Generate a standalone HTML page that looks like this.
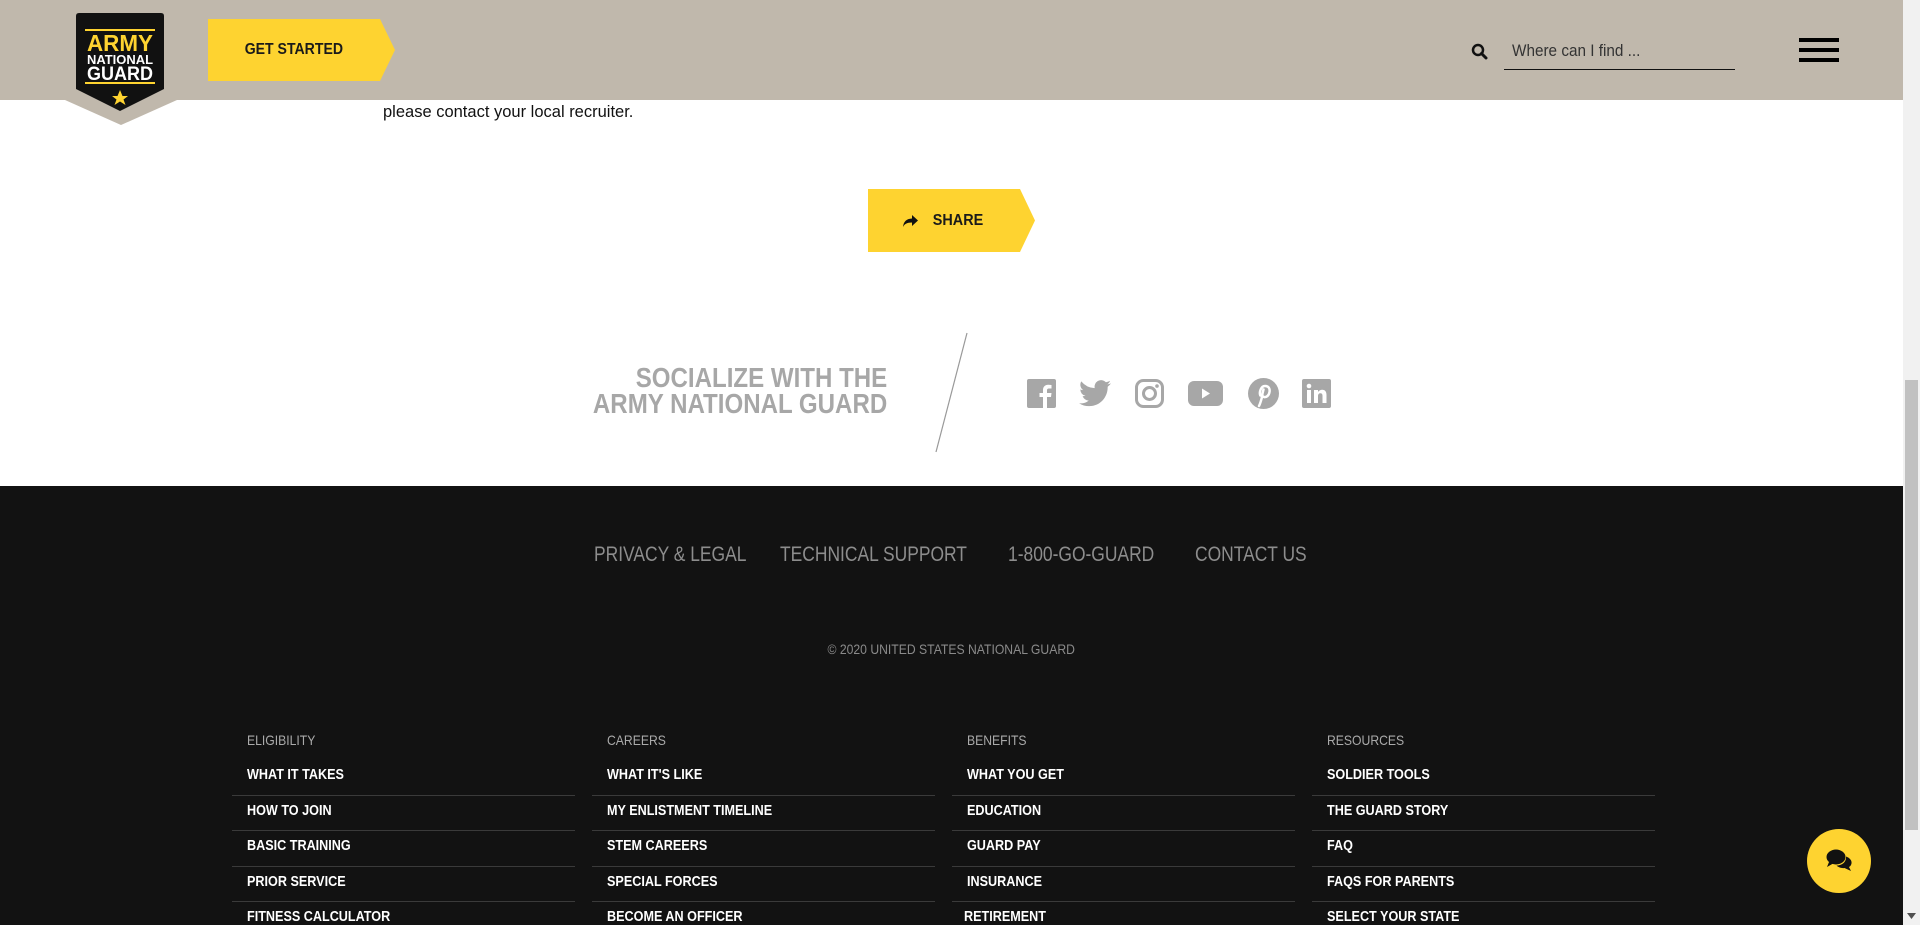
<!DOCTYPE html>
<html><head><meta charset="utf-8">
<style>
*{margin:0;padding:0;box-sizing:border-box}
body{width:1920px;height:925px;overflow:hidden;background:#fff;font-family:"Liberation Sans",sans-serif;position:relative}
.abs{position:absolute}
.s{display:inline-block;transform:scaleX(0.83);transform-origin:left center;white-space:nowrap}
#hdr{left:0;top:0;width:1903px;height:100px;background:#c0b8ac}
#sb{left:1903px;top:0;width:17px;height:925px;background:#f1f1f1}
#thumb{left:1905px;top:380px;width:13px;height:450px;background:#c1c1c1}
.yb{background:#fed330;color:#1a1a1a;font-weight:bold;display:flex;align-items:center;justify-content:center;clip-path:polygon(0 0,calc(100% - 15px) 0,100% 50%,calc(100% - 15px) 100%,0 100%)}
#foot{left:0;top:486px;width:1903px;height:439px;background:#121212}
.fl{color:#8d8d8d;font-size:21px;top:543px}
.col{top:730px;width:343px}
.col h4{font-weight:normal;color:#aaa;font-size:14px;height:30px;line-height:20px;padding-left:15px}
.col div{color:#fff;font-weight:bold;font-size:14.5px;height:35.5px;line-height:30px;padding-left:15px;border-bottom:1px solid #3a3a3a}
.col div:last-child{border-bottom:none}
.col h4 span,.col div span{display:inline-block;transform:scaleX(0.87);transform-origin:left center;white-space:nowrap}
</style></head><body>
<div id="hdr" class="abs"></div>
<svg class="abs" style="left:65px;top:95px" width="112" height="32"><polygon points="0,5 112,5 56,30" fill="#c0b8ac"/></svg>
<svg class="abs" style="left:76px;top:13px" width="88" height="98" viewBox="0 0 88 98">
<path d="M3 0H85Q88 0 88 3V76L44 98L0 76V3Q0 0 3 0Z" fill="#111"/>
<rect x="9" y="16" width="70" height="2" fill="#fed330"/>
<rect x="9" y="69" width="70" height="2" fill="#fed330"/>
<text x="44" y="38" text-anchor="middle" font-family="Liberation Sans" font-weight="bold" font-size="23" fill="#fed330" textLength="66" lengthAdjust="spacingAndGlyphs">ARMY</text>
<text x="44" y="51" text-anchor="middle" font-family="Liberation Sans" font-weight="bold" font-size="12.5" fill="#fff" textLength="66" lengthAdjust="spacingAndGlyphs">NATIONAL</text>
<text x="44" y="67" text-anchor="middle" font-family="Liberation Sans" font-weight="bold" font-size="19" fill="#fff" textLength="66" lengthAdjust="spacingAndGlyphs">GUARD</text>
<polygon points="44,77 46.5,83 52,83 47.5,86.5 49.5,92 44,88.5 38.5,92 40.5,86.5 36,83 41.5,83" fill="#fed330"/>
</svg>
<div class="abs yb" style="left:208px;top:19px;width:187px;height:62px;font-size:16px;padding-right:15px"><span style="display:inline-block;transform:scaleX(0.88)">GET STARTED</span></div>
<svg class="abs" style="left:1471px;top:43px" width="17" height="17" viewBox="0 0 17 17"><circle cx="7" cy="7" r="5" stroke="#111" stroke-width="2.5" fill="none"/><line x1="10.5" y1="10.5" x2="15" y2="15" stroke="#111" stroke-width="3" stroke-linecap="round"/></svg>
<div class="abs" style="left:1504px;top:40px;width:231px;height:30px;border-bottom:1.5px solid #111;font-size:17px;color:#333;padding-left:8px;line-height:22px"><span class="s" style="transform:scaleX(0.9)">Where can I find ...</span></div>
<div class="abs" style="left:1799px;top:38px;width:40px;height:4px;background:#000"></div>
<div class="abs" style="left:1799px;top:48px;width:40px;height:4px;background:#000"></div>
<div class="abs" style="left:1799px;top:58px;width:40px;height:4px;background:#000"></div>

<div class="abs" style="left:383px;top:103px;font-size:16.5px;color:#111">please contact your local recruiter.</div>
<div class="abs yb" style="left:868px;top:189px;width:167px;height:63px;font-size:16px;padding-right:14px">
<svg width="16" height="14" viewBox="0 0 16 14" style="margin-right:12px"><path d="M10 1L16 6.5L10 12V8.5C5 8.5 2.5 10 1 13C1.5 7.5 4.5 4.8 10 4.5Z" fill="#111"/></svg><span style="display:inline-block;transform:scaleX(0.9)">SHARE</span></div>

<div class="abs" style="left:437px;top:365px;width:450px;text-align:right;font-weight:bold;font-size:28px;line-height:26px;color:#a7a7a7;white-space:nowrap"><span style="display:inline-block;transform:scaleX(0.86);transform-origin:right center">SOCIALIZE WITH THE<br>ARMY NATIONAL GUARD</span></div>
<svg class="abs" style="left:930px;top:330px" width="45" height="125"><line x1="37" y1="3" x2="6" y2="122" stroke="#999" stroke-width="1.2"/></svg>
<svg class="abs" style="left:1027px;top:379px" width="29" height="29" viewBox="0 0 29 29"><rect width="29" height="29" rx="2" fill="#a7a7a7"/><path d="M20 29V18H24L24.5 14H20V11.5C20 10.3 20.4 9.5 22 9.5H24.5V6Q23 5.8 21.3 5.8C17.9 5.8 16 7.8 16 11.3V14H12.5V18H16V29Z" fill="#fff"/></svg>
<svg class="abs" style="left:1079px;top:380px" width="32" height="27" viewBox="0 0 24 20"><path d="M24 2.4a9.8 9.8 0 0 1-2.8.8A4.9 4.9 0 0 0 23.3.4a9.9 9.9 0 0 1-3.1 1.2A4.9 4.9 0 0 0 11.8 6 14 14 0 0 1 1.700.9a4.9 4.9 0 0 0 1.5 6.6A4.9 4.9 0 0 1 1 6.9 4.9 4.9 0 0 0 4.9 11.8a4.9 4.9 0 0 1-2.2.1 4.9 4.9 0 0 0 4.6 3.4A9.9 9.9 0 0 1 0 17.3 14 14 0 0 0 7.5 19.5c9.1 0 14-7.5 14-14v-.6A10 10 0 0 0 24 2.4z" fill="#a7a7a7"/></svg>
<svg class="abs" style="left:1135px;top:379px" width="29" height="29" viewBox="0 0 29 29"><rect x="1.5" y="1.5" width="26" height="26" rx="7" stroke="#a7a7a7" stroke-width="3" fill="none"/><circle cx="14.5" cy="14.5" r="6" stroke="#a7a7a7" stroke-width="3" fill="none"/><circle cx="22" cy="7" r="1.8" fill="#a7a7a7"/></svg>
<svg class="abs" style="left:1188px;top:381px" width="35" height="25" viewBox="0 0 35 25"><rect width="35" height="25" rx="6" fill="#a7a7a7"/><polygon points="14,7.5 22,12.5 14,17.5" fill="#fff"/></svg>
<svg class="abs" style="left:1248px;top:378px" width="31" height="31" viewBox="0 0 31 31"><circle cx="15.5" cy="15.5" r="15.5" fill="#a7a7a7"/><path d="M14 19C13 23 12.5 25 11 28M12.3 17.5C11 14 13 8 17 8C21 8 22 11 21.5 14C21 17.5 18.5 19.5 16 19C14.5 18.7 14 17.5 14.5 15.5L15.5 11.5" stroke="#fff" stroke-width="2.5" fill="none" stroke-linecap="round"/></svg>
<svg class="abs" style="left:1302px;top:379px" width="29" height="29" viewBox="0 0 29 29"><rect width="29" height="29" rx="2" fill="#a7a7a7"/><rect x="5" y="11" width="4" height="13" fill="#fff"/><circle cx="7" cy="7" r="2.3" fill="#fff"/><path d="M12 11H16V13C17 11.5 18.5 10.7 20.3 10.7C23 10.7 24.5 12.5 24.5 16V24H20.5V16.8C20.5 15 19.8 14.2 18.4 14.2C17 14.2 16 15.2 16 17V24H12Z" fill="#fff"/></svg>

<div id="foot" class="abs"></div>
<div class="abs fl" style="left:594px"><span class="s">PRIVACY &amp; LEGAL</span></div>
<div class="abs fl" style="left:780px"><span class="s">TECHNICAL SUPPORT</span></div>
<div class="abs fl" style="left:1008px"><span class="s">1-800-GO-GUARD</span></div>
<div class="abs fl" style="left:1195px"><span class="s">CONTACT US</span></div>
<div class="abs" style="left:0;width:1903px;text-align:center;top:641px;font-size:14px;color:#8a8a8a"><span style="display:inline-block;transform:scaleX(0.87)">© 2020 UNITED STATES NATIONAL GUARD</span></div>

<div class="abs col" style="left:232px"><h4><span>ELIGIBILITY</span></h4><div><span>WHAT IT TAKES</span></div><div><span>HOW TO JOIN</span></div><div><span>BASIC TRAINING</span></div><div><span>PRIOR SERVICE</span></div><div><span>FITNESS CALCULATOR</span></div></div>
<div class="abs col" style="left:592px"><h4><span>CAREERS</span></h4><div><span>WHAT IT'S LIKE</span></div><div><span>MY ENLISTMENT TIMELINE</span></div><div><span>STEM CAREERS</span></div><div><span>SPECIAL FORCES</span></div><div><span>BECOME AN OFFICER</span></div></div>
<div class="abs col" style="left:952px"><h4><span>BENEFITS</span></h4><div><span>WHAT YOU GET</span></div><div><span>EDUCATION</span></div><div><span>GUARD PAY</span></div><div><span>INSURANCE</span></div><div style="padding-left:12px"><span>RETIREMENT</span></div></div>
<div class="abs col" style="left:1312px"><h4><span>RESOURCES</span></h4><div><span>SOLDIER TOOLS</span></div><div><span>THE GUARD STORY</span></div><div><span>FAQ</span></div><div><span>FAQS FOR PARENTS</span></div><div><span>SELECT YOUR STATE</span></div></div>

<div class="abs" style="left:1807px;top:829px;width:64px;height:64px;border-radius:50%;background:#fed330"></div>
<svg class="abs" style="left:1825px;top:848px" width="28" height="24" viewBox="0 0 28 24"><ellipse cx="11" cy="9" rx="9.5" ry="7.5" fill="#111"/><path d="M4 14L2 19L9 15Z" fill="#111"/><path d="M21 8.5C25 10 27 12.5 26.5 15.5C26 17.5 25 18.5 24 19L26 23L19.5 20C16 20.5 13 19 11.5 17.5C17 17.5 21.5 14 21 8.5Z" fill="#111"/></svg>

<div id="sb" class="abs"></div>
<div id="thumb" class="abs"></div>
<svg class="abs" style="left:1906px;top:912px" width="11" height="8"><polygon points="1,1 10,1 5.5,7" fill="#505050"/></svg>
</body></html>
